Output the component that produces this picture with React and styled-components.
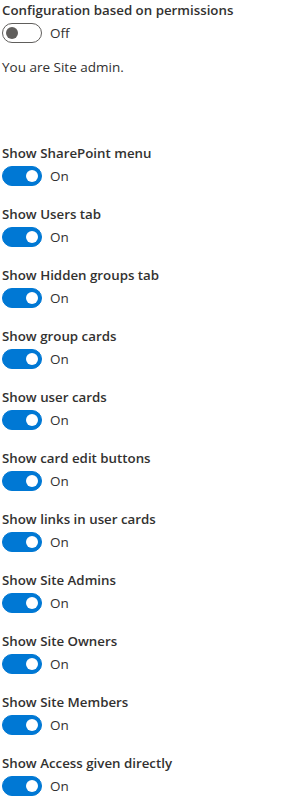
import React, { useState } from 'react';
import styled, { createGlobalStyle } from 'styled-components';

const GlobalStyle = createGlobalStyle`
  body {
    margin: 0;
    background: #fff;
    font-family: "Segoe UI", "Open Sans", sans-serif;
    color: #323130;
  }
`;

const settings = [
  'Show SharePoint menu',
  'Show Users tab',
  'Show Hidden groups tab',
  'Show group cards',
  'Show user cards',
  'Show card edit buttons',
  'Show links in user cards',
  'Show Site Admins',
  'Show Site Owners',
  'Show Site Members',
  'Show Access given directly'
];

const Page = styled.div`
  padding: 0 2px;
`;

const Field = styled.div`
  margin-bottom: ${p => p.gap}px;
`;

const Label = styled.div`
  font-size: 13.3px;
  font-weight: 600;
  line-height: 20px;
  height: 23px;
  color: #323130;
`;

const Row = styled.div`
  display: flex;
  align-items: center;
  height: 20px;
  cursor: pointer;
`;

const Pill = styled.div`
  box-sizing: border-box;
  width: 40px;
  height: 20px;
  border-radius: 10px;
  padding: 0 3px;
  display: flex;
  align-items: center;
  justify-content: ${p => (p.on ? 'flex-end' : 'flex-start')};
  background: ${p => (p.on ? '#0078d4' : '#fff')};
  border: 1px solid ${p => (p.on ? '#0078d4' : '#605e5c')};
`;

const Knob = styled.span`
  width: 12px;
  height: 12px;
  border-radius: 50%;
  background: ${p => (p.on ? '#fff' : '#605e5c')};
`;

const State = styled.span`
  margin-left: 8px;
  font-size: 13.5px;
  line-height: 20px;
  color: #323130;
`;

const Note = styled.div`
  font-size: 13.5px;
  line-height: 20px;
  margin-bottom: 66px;
`;

function Toggle({ label, initial, gap }) {
  const [on, setOn] = useState(initial);
  return (
    <Field gap={gap}>
      <Label>{label}</Label>
      <Row onClick={() => setOn(!on)}>
        <Pill on={on}>
          <Knob on={on} />
        </Pill>
        <State>{on ? 'On' : 'Off'}</State>
      </Row>
    </Field>
  );
}

export default function App() {
  return (
    <Page>
      <GlobalStyle />
      <Toggle label="Configuration based on permissions" initial={false} gap={14} />
      <Note>You are Site admin.</Note>
      {settings.map(s => (
        <Toggle key={s} label={s} initial gap={18} />
      ))}
    </Page>
  );
}
